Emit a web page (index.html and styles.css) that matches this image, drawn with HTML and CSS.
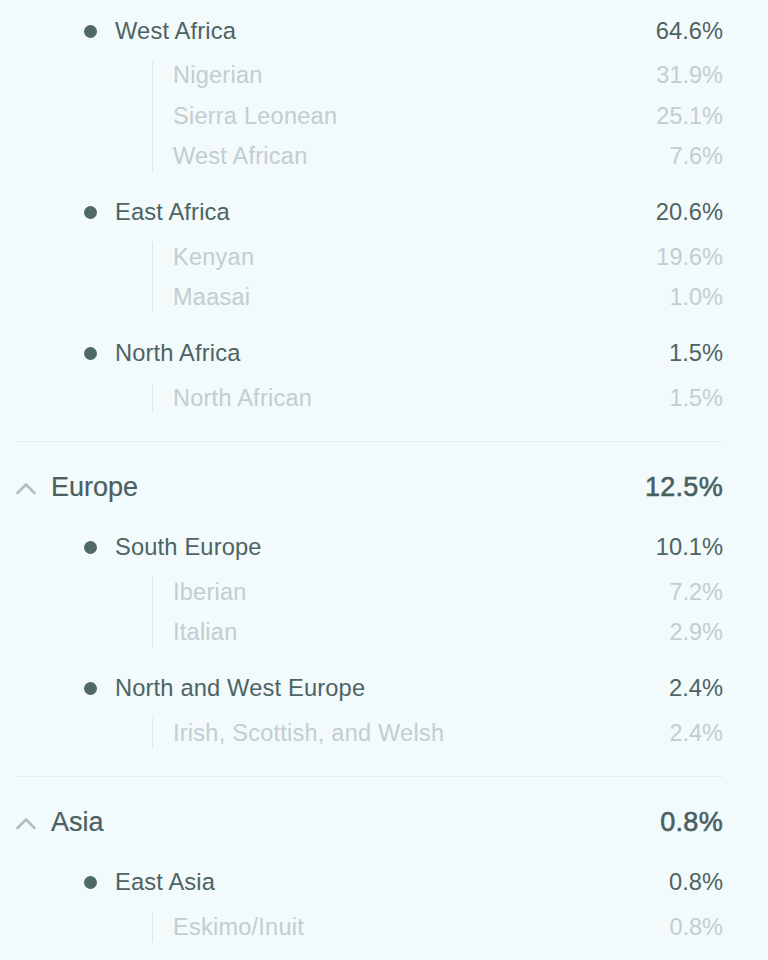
FILE: index.html
```html
<!DOCTYPE html>
<html lang="en">
<head>
<meta charset="utf-8">
<title>Ethnicity breakdown</title>
<link rel="stylesheet" href="styles.css">
</head>
<body>
<main class="list">
  <section class="region region--first">
    <div class="group">
      <div class="sub-row"><span class="dot"></span><span class="name">West Africa</span><span class="pct">64.6%</span></div>
      <ul class="items">
        <li><span>Nigerian</span><span>31.9%</span></li>
        <li><span>Sierra Leonean</span><span>25.1%</span></li>
        <li><span>West African</span><span>7.6%</span></li>
      </ul>
    </div>
    <div class="group">
      <div class="sub-row"><span class="dot"></span><span class="name">East Africa</span><span class="pct">20.6%</span></div>
      <ul class="items">
        <li><span>Kenyan</span><span>19.6%</span></li>
        <li><span>Maasai</span><span>1.0%</span></li>
      </ul>
    </div>
    <div class="group">
      <div class="sub-row"><span class="dot"></span><span class="name">North Africa</span><span class="pct">1.5%</span></div>
      <ul class="items">
        <li><span>North African</span><span>1.5%</span></li>
      </ul>
    </div>
  </section>

  <section class="region">
    <div class="head">
      <svg class="chev" width="22" height="13" viewBox="0 0 22 13" aria-hidden="true"><polyline points="2.5,11 11,2.5 19.5,11" fill="none" stroke="#b3bec0" stroke-width="2.6" stroke-linecap="round" stroke-linejoin="round"/></svg>
      <span class="title">Europe</span><span class="head-pct">12.5%</span>
    </div>
    <div class="group">
      <div class="sub-row"><span class="dot"></span><span class="name">South Europe</span><span class="pct">10.1%</span></div>
      <ul class="items">
        <li><span>Iberian</span><span>7.2%</span></li>
        <li><span>Italian</span><span>2.9%</span></li>
      </ul>
    </div>
    <div class="group">
      <div class="sub-row"><span class="dot"></span><span class="name">North and West Europe</span><span class="pct">2.4%</span></div>
      <ul class="items">
        <li><span>Irish, Scottish, and Welsh</span><span>2.4%</span></li>
      </ul>
    </div>
  </section>

  <section class="region">
    <div class="head">
      <svg class="chev" width="22" height="13" viewBox="0 0 22 13" aria-hidden="true"><polyline points="2.5,11 11,2.5 19.5,11" fill="none" stroke="#b3bec0" stroke-width="2.6" stroke-linecap="round" stroke-linejoin="round"/></svg>
      <span class="title">Asia</span><span class="head-pct">0.8%</span>
    </div>
    <div class="group">
      <div class="sub-row"><span class="dot"></span><span class="name">East Asia</span><span class="pct">0.8%</span></div>
      <ul class="items">
        <li><span>Eskimo/Inuit</span><span>0.8%</span></li>
      </ul>
    </div>
  </section>
</main>
</body>
</html>
```

FILE: styles.css
```css
html, body {
  margin: 0;
  padding: 0;
  background: #f2fafc;
}

body {
  font-family: "Liberation Sans", Arial, sans-serif;
  color: #4b6261;
}

.list {
  padding: 11px 45px 0 16px;
}

.region {
  padding-bottom: 27.5px;
}

.region + .region {
  border-top: 1px solid #e4eef0;
  padding-top: 26px;
}

.head {
  display: flex;
  align-items: center;
  height: 40px;
  margin-bottom: 20px;
}

.chev {
  flex: none;
  width: 22px;
  height: 13px;
  margin: 2px 14px 0 -1px;
}

.title {
  flex: 1;
  font-size: 27px;
  color: #4a605f;
  -webkit-text-stroke: 0.2px #4a605f;
}

.head-pct {
  font-size: 27px;
  color: #4a605f;
  -webkit-text-stroke: 0.6px #4a605f;
  letter-spacing: 0.3px;
}

.group + .group {
  margin-top: 21px;
}

.sub-row {
  display: flex;
  align-items: center;
  height: 40px;
}

.dot {
  flex: none;
  width: 13px;
  height: 13px;
  border-radius: 50%;
  background: #506a68;
  margin-left: 67.5px;
  margin-right: 18.5px;
}

.name {
  flex: 1;
  font-size: 23.7px;
  color: #4d6463;
  letter-spacing: 0.15px;
}

.pct {
  font-size: 23.7px;
  color: #4d6463;
}

.items {
  list-style: none;
  margin: 9.5px 0 0 136px;
  padding: 0 0 0 20px;
  border-left: 1px solid #dfe7e9;
  display: flex;
  flex-direction: column;
  gap: 10.5px;
}

.items li {
  display: flex;
  justify-content: space-between;
  align-items: center;
  height: 30px;
  font-size: 23.5px;
  color: #c3cdcf;
}

.items li span:first-child {
  letter-spacing: 0.25px;
}
```
